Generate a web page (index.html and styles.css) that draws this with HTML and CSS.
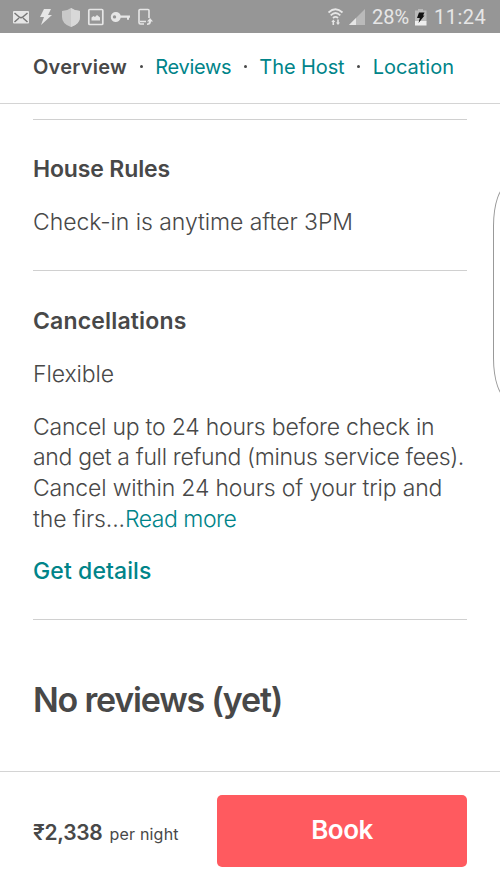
FILE: index.html
```
<!DOCTYPE html>
<html lang="en">
<head>
<meta charset="utf-8">
<title>Listing</title>
<link rel="stylesheet" href="styles.css">
</head>
<body>
<div class="screen">
  <header class="status">
    <svg class="status-icons" width="160" height="33" viewBox="0 0 160 33" fill="#e6e6e6">
      <rect x="13" y="11" width="16" height="12.500" rx="1"/>
      <path d="M14.500 13l5 4.200q1.500 1 3 0l5-4.200M14.500 22l4.500-4M27.500 22l-4.500-4" fill="none" stroke="#777" stroke-width="1.500"/>
      <path d="M44 9h7l-3 6h4L41 25l3-8h-4z"/>
      <path d="M71 8q4 3 9 3v6q0 7-9 10q-9-3-9-10v-6q5 0 9-3z" fill="#c9c9c9"/>
      <path d="M71 8q4 3 9 3v6q0 7-9 10z" fill="#d8d8d8"/>
      <rect x="88.800" y="9.500" width="14" height="15" rx="1" fill="none" stroke="#e6e6e6" stroke-width="1.700"/>
      <path d="M91.500 20.500v-3l2-1.500 1.500 1 2-2 3 2.500v3z"/>
      <path fill-rule="evenodd" d="M116 12a5 5 0 0 1 4.700 3.500H130v2.300h-1v2h-2v-2h-6.300A5 5 0 1 1 116 12zm-1.500 3.200a1.700 1.700 0 1 0 0 3.400 1.700 1.700 0 0 0 0-3.400z"/>
      <path d="M144 24h-3.500q-1.500 0-1.500-1.500v-12q0-1 1-1h8q1 0 1 1V18M140 21.500h6" fill="none" stroke="#e6e6e6" stroke-width="1.600"/>
      <path d="M150 18l3 3.500h-2q0 3.500-4 3.500v-1.500q2 0 2-2h-2z"/>
    </svg>
    <div class="status-right">
      <svg width="42" height="33" viewBox="0 0 42 33" fill="#e6e6e6">
        <path d="M0.500 12.500q7-6.500 14 0M2.700 15.300q4.800-4.500 9.600 0M5 18q2.500-2.200 5 0" fill="none" stroke="#e6e6e6" stroke-width="1.800"/>
        <path d="M5.300 19.500l2 2.500h-1.200v3h-1.600v-3H3.300zM10 25l2-2.500h-1.200v-3H9.200v3H8z"/>
        <path d="M21 25L37 9v16z" fill="#bababa"/>
        <path d="M21 25l7-7v7z"/>
      </svg>
      <span class="battery-text">28%</span>
      <svg class="battery" width="12" height="33" viewBox="0 0 12 33">
        <path d="M0 10.500h3V9h5v1.500h3.500v11H0z" fill="#bababa"/>
        <path d="M0 21h11.500v4.500H0z" fill="#eee"/>
        <path d="M4 12.500h5.500l-1.500 3h1.500L3.500 23l1.300-5H2z" fill="#111"/>
      </svg>
      <span class="clock">11:24</span>
    </div>
  </header>

  <nav class="tabs">
    <span class="tab tab-overview">Overview</span><i class="dot"></i>
    <span class="tab tab-reviews">Reviews</span><i class="dot"></i>
    <span class="tab tab-host">The Host</span><i class="dot"></i>
    <span class="tab tab-location">Location</span>
  </nav>

  <main class="content">
    <section class="section rules">
      <h2 class="h-rules">House Rules</h2>
      <p><span class="l-check">Check-in is anytime after 3PM</span></p>
    </section>
    <section class="section cancel">
      <h2 class="h-cancel">Cancellations</h2>
      <p><span class="l-flex">Flexible</span></p>
      <p class="policy">
        <span class="l1">Cancel up to 24 hours before check in</span><br>
        <span class="l2">and get a full refund (minus service fees).</span><br>
        <span class="l3">Cancel within 24 hours of your trip and</span><br>
        <span class="l4">the firs...<a class="more">Read more</a></span>
      </p>
      <a class="details">Get details</a>
    </section>
    <section class="section reviews">
      <h1>No reviews (yet)</h1>
    </section>
  </main>

  <footer class="booking">
    <div class="price"><strong>₹2,338</strong><span class="unit">per night</span></div>
    <button class="book">Book</button>
  </footer>
  <div class="edge"></div>
</div>
</body>
</html>
```
FILE: styles.css
```
* { box-sizing: border-box; }
body { margin: 0; background: #fff; color: #484848; font-family: Inter, "Liberation Sans", sans-serif; }
.screen { position: relative; width: 500px; height: 889px; overflow: hidden; display: flex; flex-direction: column; }
.status { height: 33px; flex: none; background: #969696; display: flex; justify-content: space-between; color: #e6e6e6; font: 20px/35px Roboto, sans-serif; }
.status svg { display: block; flex: none; }
.status-right { display: flex; width: 172px; }
.battery-text { width: 43px; margin-left: 2px; white-space: nowrap; }
.clock { margin-left: 7px; letter-spacing: 0.5px; }
.tabs { height: 71px; flex: none; border-bottom: 1px solid #d4d4d4; padding: 0 46px 3px 33px; display: flex; align-items: center; justify-content: space-between; color: #008489; font-size: 20px; white-space: nowrap; }
.tab-overview { color: #484848; font-weight: 600; letter-spacing: 0.25px; }
.tab-reviews { letter-spacing: -0.3px; }
.tab-host { letter-spacing: -0.1px; }
.dot { width: 3px; height: 3px; border-radius: 50%; background: #484848; }
.content { flex: 1; padding: 15px 33px 0; }
.section { border-top: 1px solid #d0d0d0; }
.rules { height: 151px; padding-top: 34px; }
.cancel { height: 349px; padding-top: 35px; }
.reviews { padding-top: 58px; }
h1, h2, p { margin: 0; white-space: nowrap; }
h2 { font-size: 23px; line-height: 31px; font-weight: 600; }
.h-rules { letter-spacing: -0.15px; }
.h-cancel { letter-spacing: 0.17px; }
p { margin-top: 22px; font-size: 23px; line-height: 30.700px; font-weight: 300; }
.l-check { letter-spacing: -0.07px; }
.l-flex { letter-spacing: -0.1px; }
.l1 { letter-spacing: -0.22px; }
.l2 { letter-spacing: -0.33px; }
.l3 { letter-spacing: -0.18px; }
.l4 { letter-spacing: -0.1px; }
.more { color: #008489; letter-spacing: -0.5px; }
.details { display: block; margin-top: 21px; font-size: 23px; line-height: 31px; font-weight: 500; letter-spacing: 0.1px; color: #008489; }
h1 { font-size: 34px; line-height: 44px; font-weight: 600; letter-spacing: -1.200px; }
.booking { height: 118px; flex: none; border-top: 1px solid #d4d4d4; padding: 23px 33px; display: flex; justify-content: space-between; align-items: flex-start; }
.price { display: flex; align-items: baseline; line-height: 31px; margin-top: 22px; white-space: nowrap; }
.price strong { font-size: 21px; font-weight: 600; letter-spacing: -0.3px; }
.unit { font-size: 16px; margin-left: 7px; letter-spacing: 0.2px; }
.book { width: 250px; height: 72px; border: 0; border-radius: 5px; background: #ff5a5f; color: #fff; font: 600 26px Inter, sans-serif; letter-spacing: -0.5px; padding: 0 0 3px; }
.edge { position: absolute; left: 493px; top: 186px; width: 30px; height: 212px; border: 1px solid #999; border-radius: 14px / 40px; }
```
